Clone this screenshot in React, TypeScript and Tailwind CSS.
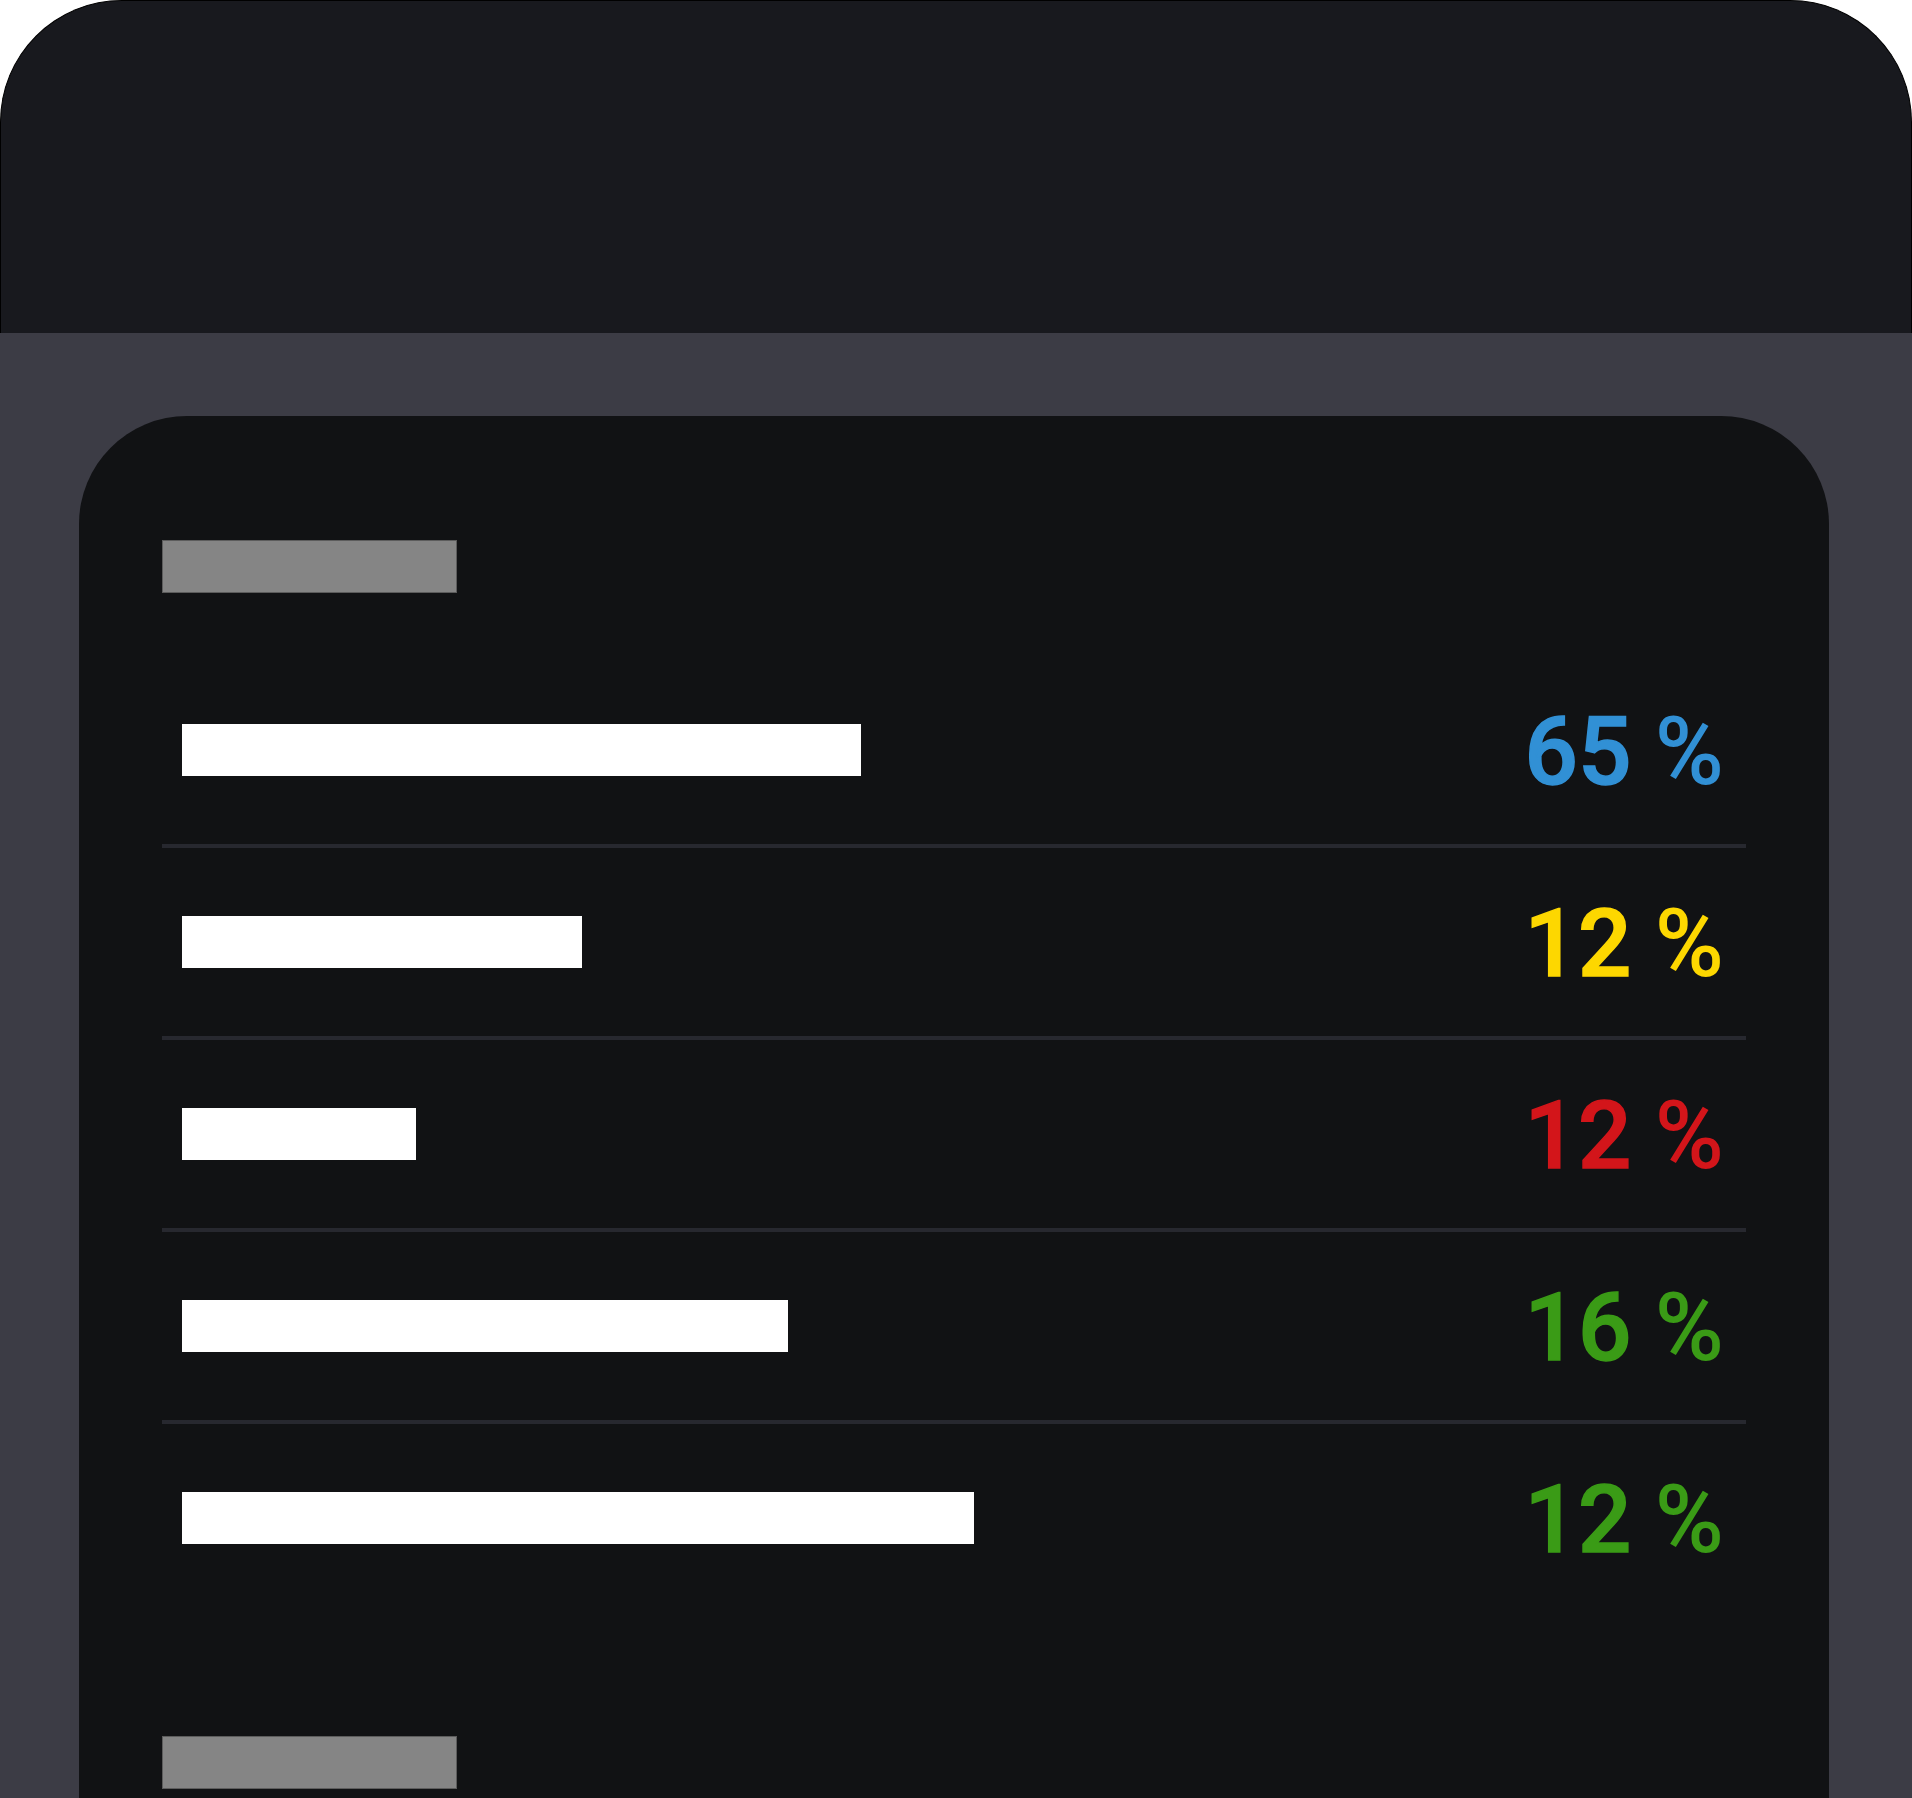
import React from 'react'

interface ShareRow {
  id: string
  barWidth: number
  value: number
  color: string
}

const rows: ShareRow[] = [
  { id: 'a', barWidth: 679, value: 65, color: 'text-[#3190d5]' },
  { id: 'b', barWidth: 400, value: 12, color: 'text-[#fdd700]' },
  { id: 'c', barWidth: 234, value: 12, color: 'text-[#d3151a]' },
  { id: 'd', barWidth: 606, value: 16, color: 'text-[#3a9b16]' },
  { id: 'e', barWidth: 792, value: 12, color: 'text-[#3a9b16]' },
]

const Placeholder = () => (
  <div className="h-[53px] w-[295px] bg-[#858585] border border-[#5c5c5c]" />
)

export default function App() {
  return (
    <div className="flex flex-col h-[1798px] overflow-hidden bg-white font-['Roboto',sans-serif]">
      {/* Header */}
      <div className="h-[333px] shrink-0 bg-[#18191e] rounded-t-[122px] border-t border-x border-black" />

      {/* Body */}
      <div className="flex-1 bg-[#3c3c45] pl-[79px] pr-[83px] pt-[83px]">
        <div className="h-full bg-[#111214] rounded-t-[108px] px-[83px] pt-[124px]">
          <Placeholder />

          <div className="mt-[63px]">
            {rows.map((row, index) => (
              <React.Fragment key={row.id}>
                {index > 0 && <div className="h-1 bg-[#27282f]" />}
                <div className="h-[188px] flex items-center justify-between pl-5 pr-[22px]">
                  <div className="h-[52px] bg-white" style={{ width: row.barWidth }} />
                  <span className={`text-[94px] leading-none font-medium translate-y-[2px] ${row.color}`}>
                    <span className="[-webkit-text-stroke:1.5px_currentColor]">{row.value}</span> %
                  </span>
                </div>
              </React.Fragment>
            ))}
          </div>

          <div className="mt-[124px]">
            <Placeholder />
          </div>
        </div>
      </div>
    </div>
  )
}
